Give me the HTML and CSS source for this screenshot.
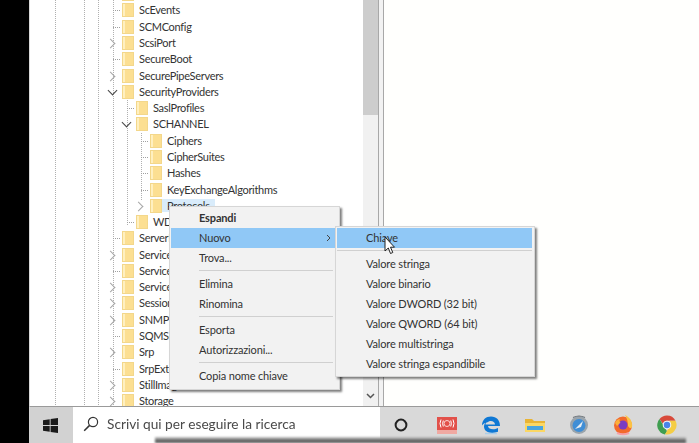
FILE: index.html
```html
<!DOCTYPE html>
<html lang="it">
<head>
<meta charset="utf-8">
<title>Editor del Registro di sistema</title>
<link rel="stylesheet" href="styles.css">
</head>
<body>
<div class="screen">
  <main class="window">
    <section class="tree">
      <ul class="rows">
        <li class="row l0"><span class="slot"></span><i class="folder"></i><span>Schedule</span></li>
        <li class="row l0"><span class="slot dash"></span><i class="folder"></i><span>ScEvents</span></li>
        <li class="row l0"><span class="slot dash"></span><i class="folder"></i><span>SCMConfig</span></li>
        <li class="row l0"><span class="slot closed"></span><i class="folder"></i><span>ScsiPort</span></li>
        <li class="row l0"><span class="slot dash"></span><i class="folder"></i><span>SecureBoot</span></li>
        <li class="row l0"><span class="slot closed"></span><i class="folder"></i><span>SecurePipeServers</span></li>
        <li class="row l0"><span class="slot open"></span><i class="folder"></i><span>SecurityProviders</span></li>
        <li class="row l1"><span class="slot dash"></span><i class="folder"></i><span>SaslProfiles</span></li>
        <li class="row l1"><span class="slot open"></span><i class="folder"></i><span>SCHANNEL</span></li>
        <li class="row l2"><span class="slot dash"></span><i class="folder"></i><span>Ciphers</span></li>
        <li class="row l2"><span class="slot dash"></span><i class="folder"></i><span>CipherSuites</span></li>
        <li class="row l2"><span class="slot dash"></span><i class="folder"></i><span>Hashes</span></li>
        <li class="row l2"><span class="slot dash"></span><i class="folder"></i><span>KeyExchangeAlgorithms</span></li>
        <li class="row l2"><span class="slot closed"></span><i class="folder"></i><span class="selected">Protocols</span></li>
        <li class="row l1"><span class="slot dash"></span><i class="folder"></i><span>WDigest</span></li>
        <li class="row l0"><span class="slot dash"></span><i class="folder"></i><span>ServerManager</span></li>
        <li class="row l0"><span class="slot closed"></span><i class="folder"></i><span>ServiceAggregated</span></li>
        <li class="row l0"><span class="slot dash"></span><i class="folder"></i><span>ServiceGroupOrder</span></li>
        <li class="row l0"><span class="slot closed"></span><i class="folder"></i><span>ServiceProvider</span></li>
        <li class="row l0"><span class="slot closed"></span><i class="folder"></i><span>Session Manager</span></li>
        <li class="row l0"><span class="slot closed"></span><i class="folder"></i><span>SNMP</span></li>
        <li class="row l0"><span class="slot dash"></span><i class="folder"></i><span>SQMServiceList</span></li>
        <li class="row l0"><span class="slot closed"></span><i class="folder"></i><span>Srp</span></li>
        <li class="row l0"><span class="slot dash"></span><i class="folder"></i><span>SrpExtensionConfig</span></li>
        <li class="row l0"><span class="slot closed"></span><i class="folder"></i><span>StillImage</span></li>
        <li class="row l0"><span class="slot closed"></span><i class="folder"></i><span>Storage</span></li>
      </ul>
    </section>
    <div class="scrollbar">
      <div class="thumb"></div>
      <svg class="arrow-down" width="9" height="6" viewBox="0 0 9 6"><path d="M1 1l3.500 3.500L8 1" fill="none" stroke="#555" stroke-width="1.500"/></svg>
    </div>
    <div class="splitter"></div>
    <section class="values"></section>
  </main>

  <footer class="taskbar">
    <div class="start">
      <svg width="15" height="15" viewBox="0 0 15 15"><path d="M0 2.200l6.700-1v5.900H0zM7.600 1.100L15 0v7.100H7.600zM0 7.900h6.700v5.900l-6.700-1zM7.600 7.900H15V15l-7.400-1.100z" fill="#1a1a1a"/></svg>
    </div>
    <div class="search">
      <svg width="16" height="16" viewBox="0 0 16 16"><circle cx="10" cy="6" r="4.600" fill="none" stroke="#333" stroke-width="1.200"/><path d="M6.600 9.400L1.200 14.800" stroke="#333" stroke-width="1.500"/></svg>
      <span>Scrivi qui per eseguire la ricerca</span>
    </div>
    <div class="tray">
      <svg class="tray-icon cortana" width="22" height="22" viewBox="0 0 22 22"><circle cx="11" cy="11" r="5.400" fill="none" stroke="#222" stroke-width="2"/></svg>
      <svg class="tray-icon" width="22" height="22" viewBox="0 0 22 22"><rect x="1" y="3" width="20" height="13" fill="#e2514a"/><rect x="1" y="16" width="20" height="4" fill="#f0a9a2"/><circle cx="11" cy="9.500" r="3" fill="none" stroke="#fbd7d3" stroke-width="1"/><path d="M5 5.500q-2 4 0 8M7.300 6.500q-1.400 3 0 6M17 5.500q2 4 0 8M14.700 6.500q1.400 3 0 6" fill="none" stroke="#fff" stroke-width="1"/></svg>
      <svg class="tray-icon" width="22" height="22" viewBox="0 0 22 22"><path d="M2 11.500C2 5.800 6 2.500 11 2.500c5.500 0 9 3.800 9 9.500H8c.3 3.300 5.500 4.500 10 2v3.800c-6 2.500-14 1-14-5.300 0-2.500 1.500-4.500 3.500-5.500-1.500 1.500-2 2.500-2 3.500h9.500c0-3.500-5-5-8-2C5.500 8.500 3.200 9.500 2 11.500z" fill="#0f78d4"/><path d="M5 19.500h12" stroke="#a8cdea" stroke-width="1.500"/></svg>
      <svg class="tray-icon" width="22" height="22" viewBox="0 0 22 22"><path d="M1 5h7l2 2h11v4H1z" fill="#e9b434"/><path d="M1 9h20v9H1z" fill="#fbd764"/><path d="M3 12h16v4H3z" fill="#4aa5df"/></svg>
      <svg class="tray-icon" width="22" height="22" viewBox="0 0 22 22"><circle cx="11" cy="11" r="9" fill="#9aa4ac"/><circle cx="11" cy="11.500" r="6.500" fill="#3f8ed6"/><path d="M7 15l6-6 2-2-2 6z" fill="#e9eef2"/><path d="M5 3.500q6-3 12 0" fill="none" stroke="#6c7278" stroke-width="1.200"/></svg>
      <svg class="tray-icon" width="22" height="22" viewBox="0 0 22 22"><circle cx="11" cy="11.500" r="9" fill="#f26a2c"/><path d="M13 1c5 2.500 8 7 7 12-1 2-3 1-4-1 0-4-1-8-3-11z" fill="#fcc244"/><circle cx="11" cy="11" r="4.500" fill="#7a3bc1"/><path d="M3 9c1-3 3-4 5-4-1 1.500-.5 3 .5 3.500L5 12z" fill="#fbb03b"/><path d="M5 19q6 2.500 12 0" stroke="#f5a0a8" stroke-width="2" fill="none"/></svg>
      <svg class="tray-icon" width="22" height="22" viewBox="0 0 22 22"><path d="M11 1.500a9.500 9.500 0 0 1 8.500 5.300H11a4.500 4.500 0 0 0-4.200 3L3.500 5A9.500 9.500 0 0 1 11 1.500z" fill="#d8493a"/><path d="M3.500 5l4 6.500 3.500 5.800-2 3.200A9.500 9.500 0 0 1 3.500 5z" fill="#3f9e50"/><path d="M19.500 6.800A9.500 9.500 0 0 1 9 20.300l4.700-8a4.500 4.500 0 0 0 0-5.500z" fill="#f4cd45"/><circle cx="11" cy="11" r="4.300" fill="#f2f2f2"/><circle cx="11" cy="11" r="3.200" fill="#4a84e8"/></svg>
    </div>
  </footer>
  <div class="video-shade"></div>

  <div class="menu menu-main">
    <div class="item strong">Espandi</div>
    <div class="item active">Nuovo<svg class="more" width="5" height="8" viewBox="0 0 5 8"><path d="M1 1l3 3-3 3" fill="none" stroke="#444" stroke-width="1"/></svg></div>
    <div class="item">Trova...</div>
    <div class="sep"></div>
    <div class="item">Elimina</div>
    <div class="item">Rinomina</div>
    <div class="sep"></div>
    <div class="item">Esporta</div>
    <div class="item">Autorizzazioni...</div>
    <div class="sep"></div>
    <div class="item">Copia nome chiave</div>
  </div>

  <div class="menu menu-sub">
    <div class="item active">Chiave</div>
    <div class="sep"></div>
    <div class="item">Valore stringa</div>
    <div class="item">Valore binario</div>
    <div class="item">Valore DWORD (32 bit)</div>
    <div class="item">Valore QWORD (64 bit)</div>
    <div class="item">Valore multistringa</div>
    <div class="item">Valore stringa espandibile</div>
  </div>

  <svg class="pointer" width="12" height="19" viewBox="0 0 12 19"><path d="M1 1v14l3.300-3 2.200 5.500 2.300-1-2.300-5.300H10.500z" fill="#fff" stroke="#222" stroke-width="1"/></svg>
</div>
</body>
</html>
```
FILE: styles.css
```css
* { box-sizing: border-box; }
html, body { margin: 0; height: 100%; background: #000; overflow: hidden; }
body { font-family: Lato, Roboto, sans-serif; color: #2b2b2b; }

.screen {
  position: relative;
  width: 699px;
  height: 443px;
  padding-left: 29px;
  display: flex;
  flex-direction: column;
  filter: blur(0.5px);
  overflow: hidden;
}

.window {
  flex: none;
  height: 407px;
  display: flex;
  background: #fff;
  border-left: 1px solid #d8d8d8;
  border-bottom: 1px solid #9a9a9a;
}

.tree {
  flex: none;
  width: 333px;
  overflow: hidden;
  background-color: #fff;
  background-repeat: no-repeat;
  --dot: repeating-linear-gradient(#b0b0b0 0 1px, transparent 1px 2px);
  background-image: var(--dot), var(--dot), var(--dot), var(--dot), var(--dot), var(--dot);
  background-size: 1px 406px, 1px 406px, 1px 406px, 1px 406px, 1px 125px, 1px 68px;
  background-position: 25px 0, 54px 0, 68px 0, 83px 0, 97px 100px, 111px 133px;
}

.rows { list-style: none; margin: -14px 0 0; padding: 0; }

.row {
  height: 16.29px;
  display: flex;
  align-items: center;
  font-size: 11px;
  letter-spacing: -0.3px;
  white-space: nowrap;
  color: #333;
}
.folder + span { margin-top: -1px; }
.l0 { padding-left: 78px; }
.l1 { padding-left: 92px; }
.l2 { padding-left: 106px; }

.slot {
  flex: none;
  width: 14px;
  height: 12px;
  background-repeat: no-repeat;
}
.dash {
  background-image: repeating-linear-gradient(90deg, #a0a0a0 0 1px, transparent 1px 2px);
  background-size: 7px 1px;
  background-position: 5px 6px;
}
.closed, .open { position: relative; }
.closed::before {
  content: "";
  position: absolute;
  left: -1px;
  top: 3px;
  width: 6px;
  height: 6px;
  border-top: 1.300px solid #a6a6a6;
  border-right: 1.300px solid #a6a6a6;
  transform: rotate(45deg);
}
.open::before {
  content: "";
  position: absolute;
  left: 1px;
  top: 1px;
  width: 6px;
  height: 6px;
  border-right: 1.500px solid #444;
  border-bottom: 1.500px solid #444;
  transform: rotate(45deg);
}

.folder {
  flex: none;
  width: 12px;
  height: 14px;
  margin-right: 5px;
  background: linear-gradient(90deg, #fff0c0 0 2px, #fcdf92 2px);
  border: 1px solid #f3d78b;
}

.selected { background: #d9ecfb; margin-left: -5px; padding: 0 5px; }

.scrollbar {
  flex: none;
  width: 15px;
  background: #f1f1f1;
  display: flex;
  flex-direction: column;
  align-items: center;
}
.thumb { width: 100%; height: 115px; background: #cdcdcd; }
.arrow-down { margin-top: auto; margin-bottom: 7px; }

.splitter {
  flex: none;
  width: 6px;
  border-left: 1px solid #a8a8a8;
  border-right: 1px solid #a8a8a8;
  background: #f2f2f2;
}
.values { flex: 1; background: #fffffd; }

.taskbar {
  flex: 1;
  display: flex;
  background: #d9d9d9;
}
.start {
  flex: none;
  width: 44px;
  display: flex;
  align-items: center;
  justify-content: center;
  padding-right: 2px;
  background: #d2d2d2;
}
.search {
  flex: none;
  width: 307px;
  display: flex;
  align-items: center;
  gap: 8px;
  padding: 0 0 3px 10px;
  background: #fff;
  font-size: 13.700px;
  color: #4a4a4a;
}
.tray { flex: 1; display: flex; align-items: center; padding-left: 10px; gap: 22px; }
.tray-icon { flex: none; filter: blur(0.5px); }
.cortana { margin-right: 2px; }

.video-shade {
  position: absolute;
  left: 155px;
  width: 531px;
  top: 437px;
  height: 6px;
  background: linear-gradient(#cfcfcf, #6a6a6a 55%, #505050);
  filter: blur(0.8px);
}

.menu {
  position: absolute;
  background: #f2f2f2;
  border: 1px solid #d6d6d6;
  box-shadow: 2px 2px 2px rgba(0, 0, 0, .5);
  font-size: 11px;
  letter-spacing: -0.15px;
  color: #333;
}
.menu-main { left: 169px; top: 206px; width: 171px; height: 184px; padding: 1px 0 0 1px; }
.menu-sub { left: 335px; top: 226px; width: 200px; height: 151px; padding: 1px 2px 0 1px; }

.item { height: 20px; display: flex; align-items: center; justify-content: space-between; padding: 0 8px 1px 28px; }
.menu-sub .item { padding-left: 29px; }
.strong { font-weight: 700; }
.active { background: #90c8f6; }
.more { flex: none; }
.sep { height: 6px; margin-left: 28px; margin-right: 6px; background: linear-gradient(#d0d0d0, #d0d0d0) 0 2px / 100% 1px no-repeat; }
.menu-sub .sep { margin-left: 0; margin-right: 0; }

.pointer { position: absolute; left: 384px; top: 236px; }
```
